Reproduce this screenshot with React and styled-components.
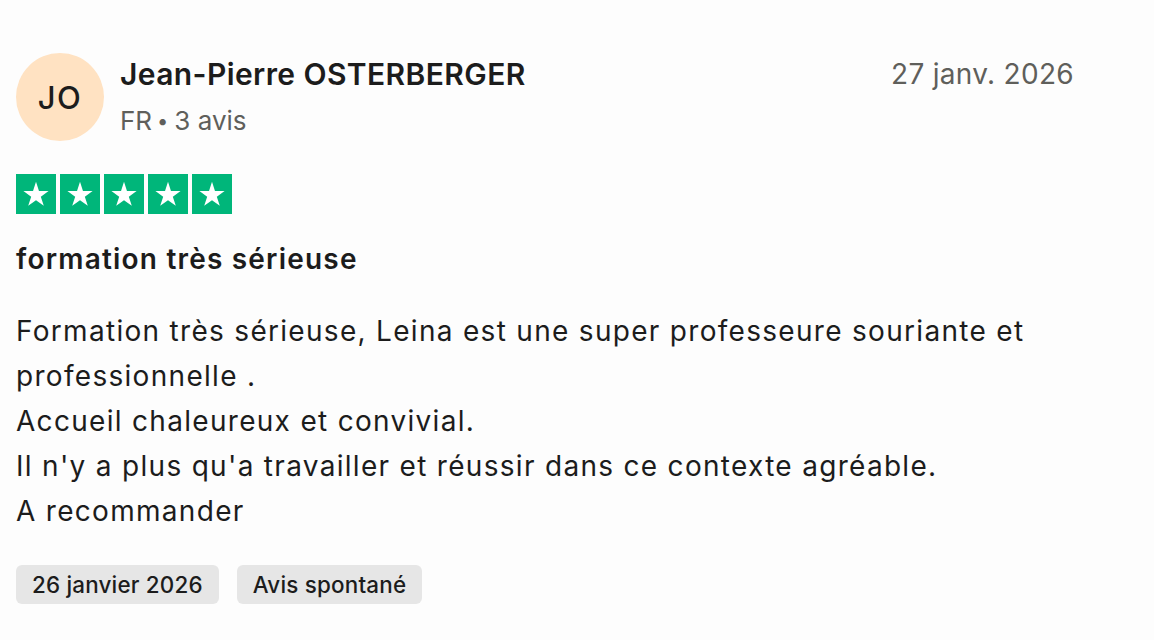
import React from 'react'
import styled, { createGlobalStyle } from 'styled-components'

const GlobalStyle = createGlobalStyle`
  html, body {
    margin: 0;
    padding: 0;
    background: #fdfdfd;
  }
  body {
    font-family: Inter, "Liberation Sans", Arial, sans-serif;
    color: #1c1c1c;
    -webkit-font-smoothing: antialiased;
  }
`

const Card = styled.article`
  width: 1058px;
  padding: 53px 80px 36px 16px;
  display: flex;
  flex-direction: column;
`

const Header = styled.header`
  display: flex;
  align-items: flex-start;
  gap: 16px;
`

const Avatar = styled.div`
  width: 88px;
  height: 88px;
  flex: 0 0 88px;
  border-radius: 50%;
  background: #ffe2c2;
  display: flex;
  align-items: center;
  justify-content: center;
  font-size: 31px;
  font-weight: 500;
  color: #1c1c1c;
  letter-spacing: 1.5px;
`

const Who = styled.div`
  flex: 1;
  display: flex;
  flex-direction: column;
`

const Name = styled.div`
  font-size: 30px;
  font-weight: 600;
  line-height: 42px;
  letter-spacing: 0.4px;
`

const Meta = styled.div`
  font-size: 26px;
  line-height: 36px;
  color: #5f5f5b;
  margin-top: 8px;
`

const Dot = styled.span`
  font-size: 20px;
  margin: 0 6px 0 5px;
  vertical-align: 2px;
`

const Date = styled.time`
  font-size: 28px;
  line-height: 42px;
  color: #5f5f5b;
  letter-spacing: 0.3px;
`

const Stars = styled.div`
  display: flex;
  gap: 4px;
  margin-top: 33px;
`

const StarBox = styled.div`
  width: 40px;
  height: 40px;
  background: #00b67a;
  display: flex;
  align-items: center;
  justify-content: center;
`

const Title = styled.h2`
  margin: 26px 0 0;
  font-size: 28px;
  font-weight: 600;
  line-height: 38px;
  letter-spacing: 1.2px;
`

const Body = styled.p`
  margin: 31px 0 0;
  font-size: 28px;
  line-height: 45px;
  letter-spacing: 1.3px;
  white-space: pre-line;
`

const Chips = styled.div`
  display: flex;
  gap: 18px;
  margin-top: 31px;
`

const Chip = styled.span`
  height: 39px;
  padding: 0 16px;
  border-radius: 6px;
  background: #e6e6e6;
  display: flex;
  align-items: center;
  font-size: 22.4px;
  font-weight: 450;
  letter-spacing: 0.2px;
  color: #1c1c1c;
`

const Star = () => (
  <svg width="28" height="28" viewBox="0 0 24 24">
    <path
      fill="#fff"
      d="M12 1.6l2.55 7.85h8.25l-6.67 4.85 2.55 7.85L12 17.3l-6.68 4.85 2.55-7.85L1.2 9.45h8.25z"
    />
  </svg>
)

const text = `Formation très sérieuse, Leina est une super professeure souriante et professionnelle .
Accueil chaleureux et convivial.
Il n'y a plus qu'a travailler et réussir dans ce contexte agréable.
A recommander`

export default function App() {
  return (
    <>
      <GlobalStyle />
      <Card>
        <Header>
          <Avatar>JO</Avatar>
          <Who>
            <Name>Jean-Pierre OSTERBERGER</Name>
            <Meta>FR<Dot>•</Dot>3 avis</Meta>
          </Who>
          <Date>27 janv. 2026</Date>
        </Header>
        <Stars>
          {[0, 1, 2, 3, 4].map(i => (
            <StarBox key={i}><Star /></StarBox>
          ))}
        </Stars>
        <Title>formation très sérieuse</Title>
        <Body>{text}</Body>
        <Chips>
          <Chip>26 janvier 2026</Chip>
          <Chip>Avis spontané</Chip>
        </Chips>
      </Card>
    </>
  )
}
